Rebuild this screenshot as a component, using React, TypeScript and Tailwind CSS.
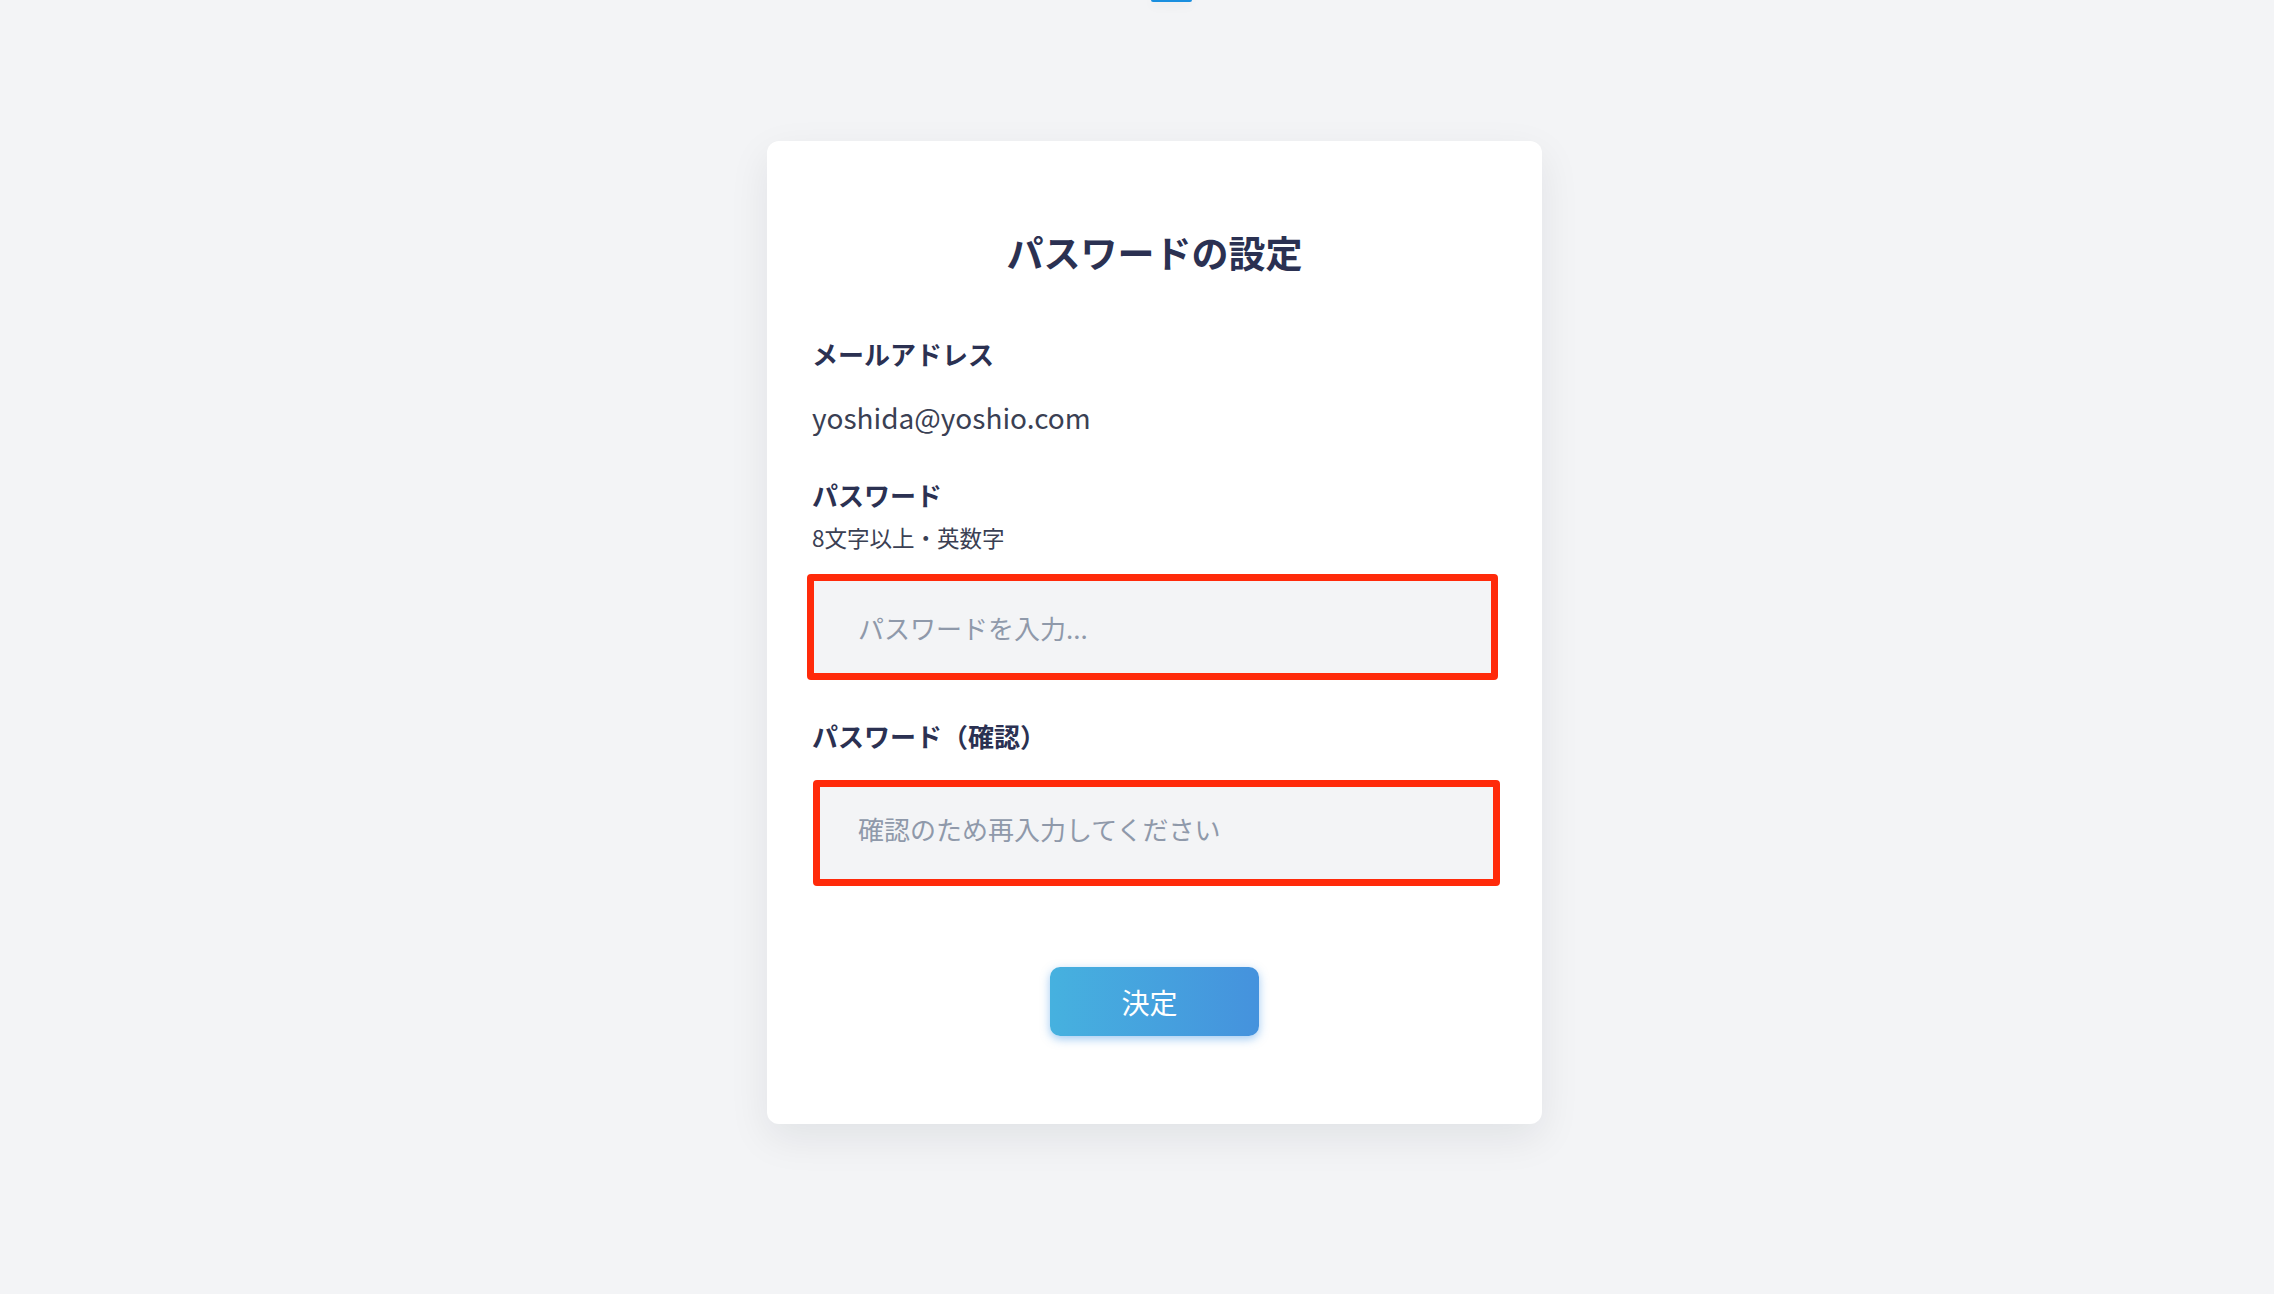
import { useState } from "react";

const font = { fontFamily: '"Noto Sans CJK JP", "Noto Sans", sans-serif' };

export default function App() {
  const [password, setPassword] = useState("");
  const [confirm, setConfirm] = useState("");

  return (
    <div className="min-h-[1294px] w-full bg-[#f3f4f6]" style={font}>
      {/* top indicator */}
      <div className="flex justify-center">
        <div className="ml-[68px] h-[2px] w-[41px] rounded-b-sm bg-[#1a8fdf] shadow-[0_2px_12px_rgba(15,23,42,0.12)]" />
      </div>

      <div className="flex justify-center pl-[35px] pt-[139px]">
        <div className="w-[775px] rounded-[12px] bg-white px-[45px] pb-[88px] pt-[89px] shadow-[0_14px_40px_rgba(17,24,39,0.08)]">
          <h1 className="text-center text-[37px] font-bold leading-[44px] text-[#2b3152]">
            パスワードの設定
          </h1>

          <div className="mt-[62px] text-[26px] font-bold leading-[36px] text-[#2b3152]">
            メールアドレス
          </div>
          <div className="mt-[27px] text-[28px] leading-[36px] text-[#3a4053]">
            yoshida@yoshio.com
          </div>

          <div className="mt-[42px] text-[26px] font-bold leading-[36px] text-[#2b3152]">
            パスワード
          </div>
          <div className="mt-[9px] text-[22.5px] leading-[30px] text-[#3a4053]">
            8文字以上・英数字
          </div>

          <div className="-ml-[5px] -mr-[1px] mt-[22px]">
            <input
              type="password"
              value={password}
              onChange={(e) => setPassword(e.target.value)}
              placeholder="パスワードを入力..."
              className="block h-[106px] w-full rounded-[4px] border-[7px] border-[#ff2a0a] bg-[#f3f4f6] pl-[44px] text-[26px] text-[#3a4053] outline-none placeholder:text-[#8f99aa]"
            />
          </div>

          <div className="mt-[38px] text-[26px] font-bold leading-[36px] text-[#2b3152]">
            パスワード（確認）
          </div>

          <div className="-mr-[3px] ml-[1px] mt-[26px]">
            <input
              type="password"
              value={confirm}
              onChange={(e) => setConfirm(e.target.value)}
              placeholder="確認のため再入力してください"
              className="block h-[106px] w-full rounded-[4px] border-[7px] border-[#ff2a0a] bg-[#f3f4f6] pb-[10px] pl-[38px] text-[26px] text-[#3a4053] outline-none placeholder:text-[#8f99aa]"
            />
          </div>

          <div className="mt-[81px] flex justify-center">
            <button
              type="button"
              className="h-[69px] w-[209px] rounded-[10px] bg-gradient-to-r from-[#46b1df] to-[#4592dd] pr-[10px] text-[28px] text-white shadow-[0_3px_10px_rgba(66,150,230,0.5)]"
            >
              決定
            </button>
          </div>
        </div>
      </div>
    </div>
  );
}
